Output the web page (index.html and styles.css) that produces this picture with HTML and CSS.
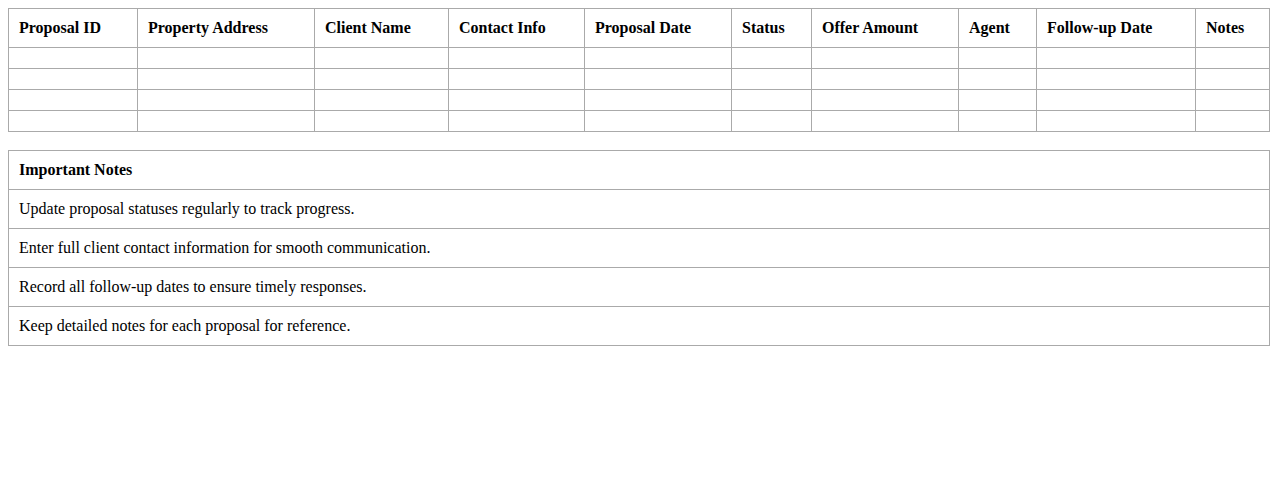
FILE: index.html
```html
<!DOCTYPE html>
<html>
<head>
<meta charset="utf-8">
<link rel="stylesheet" href="styles.css">
</head>
<body>
<table class="grid">
<colgroup>
<col class="c1"><col class="c2"><col class="c3"><col class="c4"><col class="c5"><col class="c6"><col class="c7"><col class="c8"><col class="c9"><col>
</colgroup>
<thead>
<tr><th>Proposal ID</th><th>Property Address</th><th>Client Name</th><th>Contact Info</th><th>Proposal Date</th><th>Status</th><th>Offer Amount</th><th>Agent</th><th>Follow-up Date</th><th>Notes</th></tr>
</thead>
<tbody>
<tr><td></td><td></td><td></td><td></td><td></td><td></td><td></td><td></td><td></td><td></td></tr>
<tr><td></td><td></td><td></td><td></td><td></td><td></td><td></td><td></td><td></td><td></td></tr>
<tr><td></td><td></td><td></td><td></td><td></td><td></td><td></td><td></td><td></td><td></td></tr>
<tr><td></td><td></td><td></td><td></td><td></td><td></td><td></td><td></td><td></td><td></td></tr>
</tbody>
</table>
<table class="grid notes">
<thead><tr><th>Important Notes</th></tr></thead>
<tbody>
<tr><td>Update proposal statuses regularly to track progress.</td></tr>
<tr><td>Enter full client contact information for smooth communication.</td></tr>
<tr><td>Record all follow-up dates to ensure timely responses.</td></tr>
<tr><td>Keep detailed notes for each proposal for reference.</td></tr>
</tbody>
</table>
</body>
</html>
```
FILE: styles.css
```css
body {
  margin: 8px;
  font-family: "Liberation Serif", "Times New Roman", serif;
  font-size: 16px;
  color: #000;
  background: #fff;
}
.grid {
  width: 100%;
  border-collapse: collapse;
  table-layout: fixed;
}
.grid th, .grid td {
  border: 1px solid #aaa;
  padding: 10px;
  text-align: left;
  line-height: 18px;
}
.grid td:empty {
  line-height: 0;
}
.grid th { font-weight: bold; }
.c1 { width: 129px; }
.c2 { width: 177px; }
.c3 { width: 134px; }
.c4 { width: 136px; }
.c5 { width: 147px; }
.c6 { width: 80px; }
.c7 { width: 147px; }
.c8 { width: 78px; }
.c9 { width: 159px; }
.notes {
  margin-top: 18px;
}
```
